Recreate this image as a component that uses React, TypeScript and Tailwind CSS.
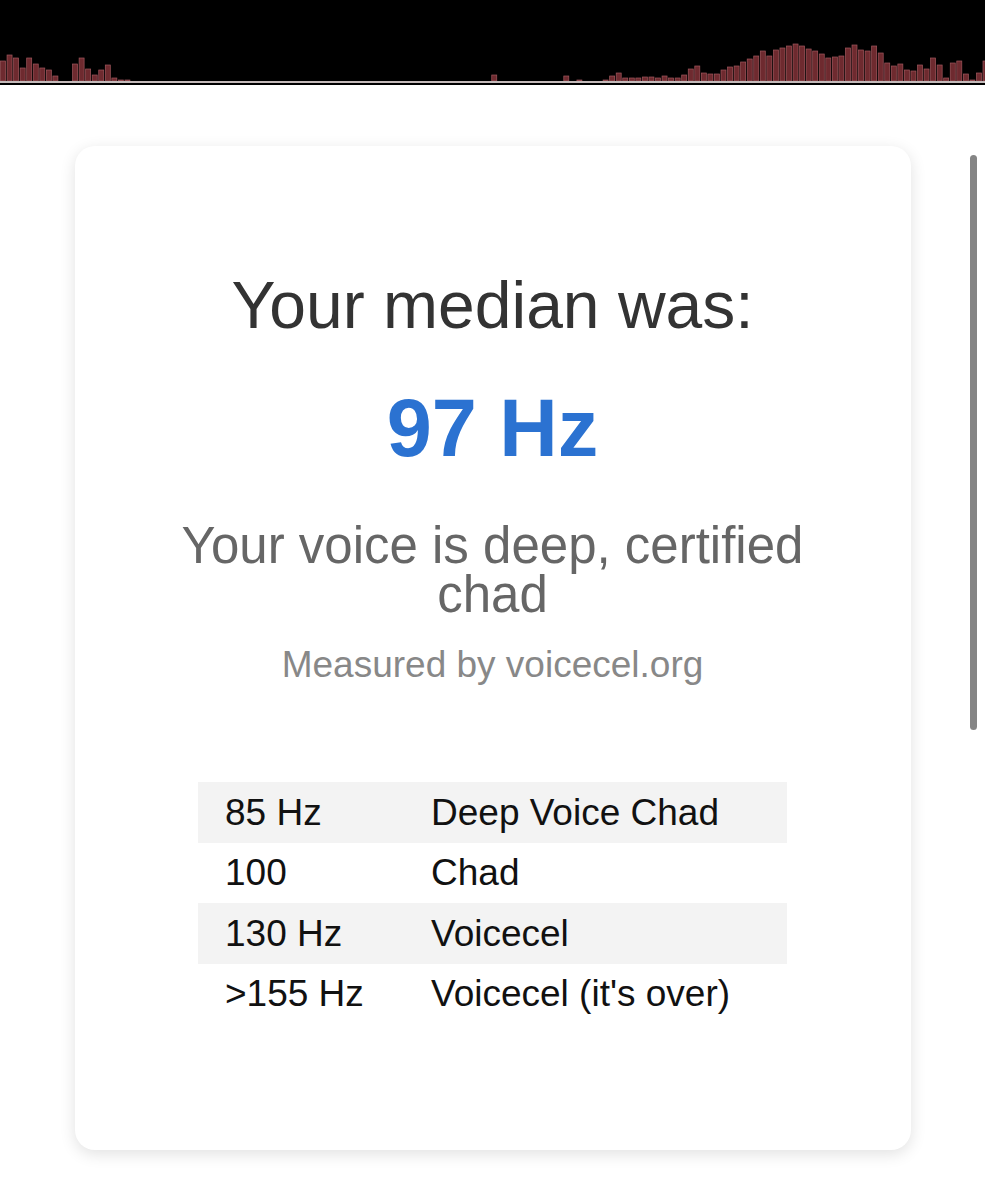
import React from "react";

// bar heights of the pitch strip, left to right
const bars = [
  20, 26, 23, 13, 23, 17, 13, 11, 5, 0, 0, 17, 23, 12, 6, 11, 16, 3, 1, 1,
  0, 0, 0, 0, 0, 0, 0, 0, 0, 0, 0, 0, 0, 0, 0, 0, 0, 0, 0, 0,
  0, 0, 0, 0, 0, 0, 0, 0, 0, 0, 0, 0, 0, 0, 0, 0, 0, 0, 0, 0,
  0, 0, 0, 0, 0, 0, 0, 0, 0, 0, 0, 0, 0, 0, 0, 6, 0, 0, 0, 0,
  0, 0, 0, 0, 0, 0, 5, 0, 1, 0, 0, 0, 1, 5, 8, 3, 3, 3, 4, 4,
  3, 5, 3, 3, 6, 12, 15, 8, 7, 7, 11, 14, 15, 19, 22, 25, 30, 25, 31, 33,
  35, 37, 35, 32, 30, 27, 23, 24, 25, 33, 36, 31, 30, 35, 28, 18, 15, 17, 11, 10,
  16, 12, 23, 16, 3, 18, 20, 7, 1, 8, 20,
];

const ranges = [
  { hz: "85 Hz", label: "Deep Voice Chad" },
  { hz: "100", label: "Chad" },
  { hz: "130 Hz", label: "Voicecel" },
  { hz: ">155 Hz", label: "Voicecel (it's over)" },
];

function PitchStrip() {
  return (
    <div className="w-full bg-black">
      <svg width="985" height="81" viewBox="0 0 985 81" className="block">
        {bars.map((h, i) =>
          h > 0 ? (
            <rect
              key={i}
              x={i * 6.55 + 0.5}
              y={81 - h}
              width={5}
              height={h}
              fill="#6e2a2f"
              stroke="#a0575d"
              strokeWidth={0.7}
            />
          ) : null
        )}
      </svg>
      <div className="h-[2px] bg-[#c4baba]" />
      <div className="h-[2px] bg-black" />
    </div>
  );
}

export default function App() {
  return (
    <div className="relative h-[1200px] w-full overflow-hidden bg-white font-['Liberation_Sans',Arial,sans-serif]">
      <PitchStrip />

      {/* Result Card */}
      <div className="mx-auto mt-[61px] w-[836px] rounded-[20px] bg-white pt-[126px] pb-[126px] shadow-[0_4px_16px_rgba(0,0,0,0.12)]">
        <h1 className="text-center text-[66px] leading-none text-[#333333]">
          Your median was:
        </h1>
        <div className="mt-[50px] text-center text-[81px] font-bold leading-none text-[#2b72d1]">
          97 Hz
        </div>
        <p className="mx-auto mt-[52px] max-w-[680px] text-center text-[51px] leading-[49px] text-[#666666]">
          Your voice is deep, certified chad
        </p>
        <p className="mt-[27px] text-center text-[37px] leading-none text-[#888888]">
          Measured by voicecel.org
        </p>

        {/* Range Table */}
        <div className="mx-auto mt-[99px] flex w-[589px] flex-col text-[37px] text-[#111111]">
          {ranges.map((r, i) => (
            <div
              key={r.hz}
              className={`flex h-[60.5px] items-center ${i % 2 === 0 ? "bg-[#f3f3f3]" : "bg-white"}`}
            >
              <span className="w-[233px] pl-[27px]">{r.hz}</span>
              <span>{r.label}</span>
            </div>
          ))}
        </div>
      </div>

      {/* Scrollbar thumb */}
      <div className="absolute left-[970px] top-[155px] h-[575px] w-[7px] rounded-full bg-[#858585]" />
    </div>
  );
}
